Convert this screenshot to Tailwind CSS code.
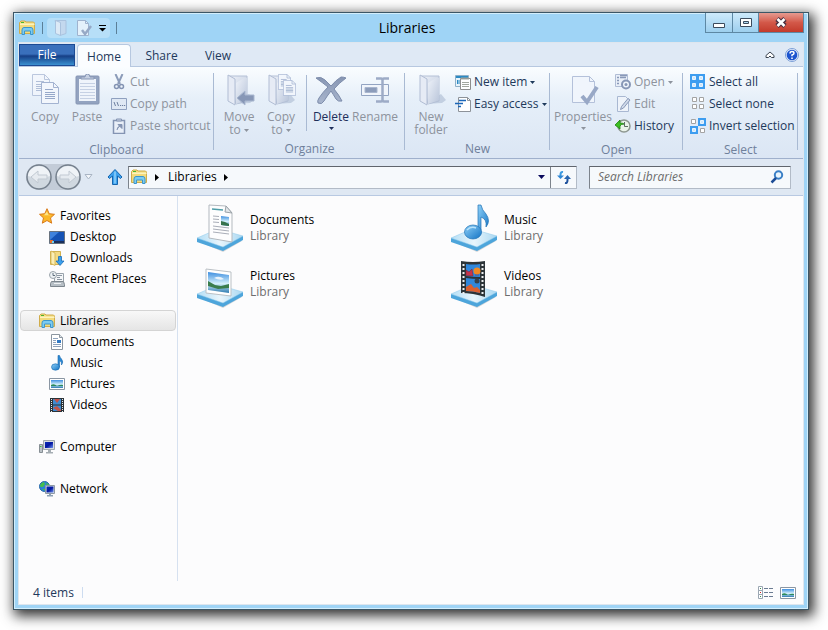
<!DOCTYPE html>
<html lang="en">

<head>
    <meta charset="UTF-8">
    <meta name="viewport" content="width=device-width, initial-scale=1.0">
    <title>Libraries</title>
    <script src="https://cdn.jsdelivr.net/npm/@tailwindcss/browser@4"></script>
</head>

<body class="bg-white font-['Open_Sans','Noto_Sans',sans-serif] text-xs">

    <!-- Shared icons -->
    <svg class="absolute size-0" aria-hidden="true">
        <defs>
            <linearGradient id="folderGray" x1="0" x2="1" y2="1">
                <stop offset="0" stop-color="#eef2f9" />
                <stop offset="1" stop-color="#b9c5da" />
            </linearGradient>
            <linearGradient id="slab" x1="0" x2="1">
                <stop offset="0" stop-color="#b4def5" />
                <stop offset=".5" stop-color="#e8f5fc" />
                <stop offset="1" stop-color="#a9d7f1" />
            </linearGradient>
            <linearGradient id="note" x1="0" x2="1" y2="1">
                <stop offset="0" stop-color="#8ed0f8" />
                <stop offset="1" stop-color="#1273c4" />
            </linearGradient>
            <linearGradient id="sky" x2="0" y2="1">
                <stop offset="0" stop-color="#3f8fe0" />
                <stop offset=".55" stop-color="#d4f0fb" />
                <stop offset="1" stop-color="#2d7ab0" />
            </linearGradient>
            <linearGradient id="screen" x1="0" x2="1" y2="1">
                <stop offset="0" stop-color="#0a2bb8" />
                <stop offset=".5" stop-color="#0418a0" />
                <stop offset="1" stop-color="#6f92ee" />
            </linearGradient>
            <linearGradient id="steel" x2="0" y2="1">
                <stop offset="0" stop-color="#8796b3" />
                <stop offset="1" stop-color="#a9b6ce" />
            </linearGradient>
        </defs>
        <symbol id="caret" viewBox="0 0 5 3">
            <path d="M0 0h5L2.500 3z" fill="currentColor" />
        </symbol>
        <symbol id="libraries" viewBox="0 0 16 16">
            <path d="M.5 13.500V2.500L2 1h4l1 1h7.500l1 1v10.500z" fill="#f3da7c" stroke="#d0ac4a" />
            <path d="M1 5h14.500V3.500H1z" fill="#fdf3bb" />
            <path d="M2 2.500h3" stroke="#4bb52d" />
            <path d="M3 14.500V10q0-2.500 2-2.500h7q2 0 2 2.500v4.500h-2.500V11h-6v3.500z" fill="#7ccbf0" stroke="#3b95cc" />
        </symbol>
        <symbol id="picture" viewBox="0 0 16 16">
            <path d="M.5 2.500h15v11H.5z" fill="#fff" stroke="#8a96a3" />
            <path d="M2 4h12v8H2z" fill="url(#sky)" />
            <path d="M2 9q3-2 6 1 4-2 6-1v1H2z" fill="#2c8a5a" />
        </symbol>
        <symbol id="slabBase" viewBox="0 0 48 48">
            <path d="M4 38l23 10 19-11-20-5z" fill="#000" opacity=".15" />
            <path d="M1 34v4l26 9 20-11v-4z" fill="#4da5db" />
            <path d="M1 34l21-9 25 7-20 11z" fill="url(#slab)" stroke="#8cc8ea" stroke-width=".5" />
        </symbol>
        <symbol id="folderBig" viewBox="0 0 32 32">
            <path d="M9 30l18-1 4-3-5-6z" fill="#8fa0be" opacity=".4" />
            <path d="M6 2h18v25l-11 3z" fill="url(#folderGray)" stroke="#b4c0d6" />
            <path d="M5 1l7 4v26l-7-4z" fill="#e6ebf5" stroke="#b1bdd4" />
            <path d="M13 9l8-5h3v22l-11 4z" fill="url(#folderGray)" />
        </symbol>
        <symbol id="pageGray" viewBox="0 0 18 22">
            <path d="M.5.500h12l5 5v16H.5z" fill="#f2f6fc" stroke="#a3b3d1" />
            <path d="M12.500.500v5h5" fill="none" stroke="#a3b3d1" />
            <path d="M4 7.500h8M4 10.500h10M4 12.500h10M4 14.500h10M4 16.500h10" stroke="#96a8c9" />
        </symbol>
    </svg>

    <div class="flex h-screen pt-3 pr-[19px] pb-5 pl-[13px]">
        <div class="flex flex-1 flex-col border border-[#3c5666] bg-[#9fd4f6] shadow-[3px_4px_12px_2px_rgba(0,0,0,0.8)]">
            <div class="flex flex-1 flex-col border border-[#d3eefc] px-[3px] pb-[3px]">

                <!-- Title bar -->
                <header class="relative flex h-7 items-center justify-center pr-2 text-black">
                    <div class="absolute top-0.5 left-px flex h-6 items-center">
                        <svg class="size-4">
                            <use href="#libraries" />
                        </svg>
                        <span class="ml-[7px] h-3 w-px bg-[#5b7f98]"></span>
                        <div class="ml-1 flex h-5 items-center gap-[7px] rounded bg-white/25 pr-1 pl-1.5">
                            <button aria-label="New folder">
                                <svg class="block size-4" viewBox="0 0 16 16">
                                    <path d="M2 .500h11v13l-6 2z" fill="#c3d8ee" stroke="#a9c2de" />
                                    <path d="M2.500.500l5 2v13l-5-2z" fill="#dce9f6" stroke="#a9c2de" />
                                </svg>
                            </button>
                            <button aria-label="Properties">
                                <svg class="block size-4" viewBox="0 0 16 16">
                                    <path d="M1.500.500h8l3 3v12h-11z" fill="#e4f1fb" stroke="#9fb3cf" />
                                    <path d="M9.500.500v3h3" fill="none" stroke="#9fb3cf" />
                                    <path d="M6 10l3 4 6-8" fill="none" stroke="#96a9c6" stroke-width="2.500" />
                                </svg>
                            </button>
                            <button aria-label="Customize toolbar">
                                <svg class="block h-2 w-[7px]" viewBox="0 0 7 8">
                                    <path d="M0 1.500h7" stroke="currentColor" />
                                    <path d="M0 4h7L3.500 7.500z" fill="currentColor" />
                                </svg>
                            </button>
                        </div>
                        <span class="ml-1.5 h-3 w-px bg-[#5b7f98]"></span>
                    </div>

                    <h1 class="text-sm">Libraries</h1>

                    <div class="absolute -top-px right-0 flex h-5 border border-t-0 border-[#5d88a4]">
                        <button aria-label="Minimize" class="flex w-[27px] items-end justify-center border-r border-[#5d88a4] bg-linear-to-b from-[#cdeafb] to-[#9dcfee] pb-1">
                            <svg class="h-[5px] w-3" viewBox="0 0 12 5">
                                <path d="M.5.500h11v4H.5z" fill="#fff" stroke="#3c4b5c" />
                            </svg>
                        </button>
                        <button aria-label="Maximize" class="flex w-[26px] items-center justify-center border-r border-[#5d88a4] bg-linear-to-b from-[#cdeafb] to-[#9dcfee]">
                            <svg class="h-[9px] w-3" viewBox="0 0 12 9">
                                <path d="M.5.500h11v8H.5z" fill="#fff" stroke="#3c4b5c" />
                                <path d="M3.500 3.500h5v2h-5z" fill="#b0daf2" stroke="#3c4b5c" />
                            </svg>
                        </button>
                        <button aria-label="Close" class="flex w-11 items-center justify-center bg-linear-to-b from-[#e69a90] via-[#d35849] to-[#c23a2b]">
                            <svg class="h-[11px] w-3" viewBox="0 0 12 11">
                                <path d="M2 2l8 7M10 2L2 9" stroke="#4a3040" stroke-width="5" />
                                <path d="M2.500 2l7 7M9.500 2l-7 7" stroke="#fff" stroke-width="2.500" />
                            </svg>
                        </button>
                    </div>
                </header>

                <div class="flex flex-1 flex-col border border-[#dfe6ee] bg-[#fcfcfd]">

                    <!-- Ribbon tabs -->
                    <nav class="flex h-6 items-end border-b border-[#b7c8e0] bg-[#dfe9f5] text-[#1e395b]">
                        <button class="h-[22px] w-14 border border-[#1c4a94] bg-linear-to-b from-[#3a70bc] from-45% via-[#173f86] via-55% to-[#3a90d0] text-white">File</button>
                        <button class="-mb-px ml-0.5 h-[23px] w-[54px] rounded-t border border-b-0 border-[#b7c8e0] bg-[#fbfdff] pt-0.5">Home</button>
                        <button class="h-[22px] w-[61px] pt-0.5">Share</button>
                        <button class="h-[22px] w-[52px] pt-0.5">View</button>
                        <div class="ml-auto flex h-[22px] items-center gap-[10px] pr-1">
                            <button aria-label="Collapse ribbon">
                                <svg class="block h-2 w-[10px]" viewBox="0 0 10 8">
                                    <path d="M1 4.500L5 1l4 3.500v2H6.500L5 5 3.500 6.500H1z" fill="#fff" stroke="#3b4450" />
                                </svg>
                            </button>
                            <button aria-label="Help">
                                <svg class="block size-[14px]" viewBox="0 0 14 14">
                                    <circle cx="7" cy="7" r="6.500" fill="#e8f0fb" stroke="#7c9fd6" />
                                    <circle cx="7" cy="7" r="5.300" fill="#1d55cf" />
                                    <path d="M5 5.500Q5 3.500 7 3.500t2 1.700Q9 6.300 7 7v1.300M7 9.500V11" fill="none" stroke="#fff" stroke-width="1.500" />
                                </svg>
                            </button>
                        </div>
                    </nav>

                    <!-- Ribbon -->
                    <div class="flex h-[92px] border-b border-[#9fb0cc] bg-linear-to-b from-[#fafdff] via-[#e6eff9] via-35% to-[#dbe6f4] text-[#8d939d]">

                        <section class="relative flex w-[195px] flex-col pt-1">
                            <div class="flex h-[66px] pl-[5px]">
                                <button class="flex w-[42px] flex-col items-center gap-1 pt-[3px] leading-[13px]">
                                    <svg class="size-8 shrink-0" viewBox="0 0 32 32">
                                        <use href="#pageGray" x="3" y="0" width="18" height="22" opacity=".7" />
                                        <use href="#pageGray" x="12" y="8" width="18" height="22" />
                                    </svg>
                                    Copy
                                </button>
                                <button class="flex w-[42px] flex-col items-center gap-1 pt-[3px] leading-[13px]">
                                    <svg class="size-8 shrink-0" viewBox="0 0 32 32">
                                        <rect x="5" y="2" width="23" height="28" rx="1" fill="#93a3c0" stroke="#8796b4" />
                                        <path d="M8 5h17v22H8z" fill="#eff4fb" />
                                        <path d="M9 9.500h15M9 12.500h15M9 15.500h15M9 18.500h15M9 21.500h15M9 24.500h15" stroke="#c6d1e4" />
                                        <path d="M10 5V3h4q0-3 2.500-3T19 3h4v2z" fill="#c6d0e2" stroke="#8796b4" />
                                    </svg>
                                    Paste
                                </button>
                                <div class="flex flex-col pl-[3px]">
                                    <button class="flex h-[22px] items-center gap-[3px]">
                                        <svg class="size-4" viewBox="0 0 16 16">
                                            <path d="M4.500 0L9 10M11.500 0L7 10" stroke="#8c9cb9" stroke-width="2" />
                                            <circle cx="5.500" cy="12.500" r="2" fill="none" stroke="#8494b3" stroke-width="1.500" />
                                            <circle cx="10.500" cy="12.500" r="2" fill="none" stroke="#8494b3" stroke-width="1.500" />
                                        </svg>
                                        Cut
                                    </button>
                                    <button class="flex h-[22px] items-center gap-[3px]">
                                        <svg class="size-4" viewBox="0 0 16 16">
                                            <path d="M.5 2.500h15v11H.5z" fill="#dfe8f4" stroke="#8fa0bf" />
                                            <path d="M3 6l1.500 4M6 6l1.500 4M9 9.500h1.200M11 9.500h1.200M13 9.500h1.200" stroke="#6d7f9f" />
                                        </svg>
                                        Copy path
                                    </button>
                                    <button class="flex h-[22px] items-center gap-[3px]">
                                        <svg class="size-4" viewBox="0 0 16 16">
                                            <path d="M2.500 2.500h11v13h-11z" fill="#e9eff8" stroke="#8494b3" stroke-width="1.500" />
                                            <path d="M5.500 3V1h5v2z" fill="#c6d0e2" stroke="#8494b3" />
                                            <path d="M6 12q0-3 3-4M7 6.500h4v4z" fill="#8494b3" stroke="#8494b3" />
                                        </svg>
                                        Paste shortcut
                                    </button>
                                </div>
                            </div>
                            <h2 class="mt-1 text-center leading-[18px] text-[#6f809b]">Clipboard</h2>
                            <span class="absolute top-1.5 right-0 h-[77px] w-px bg-[#a9bad3]"></span>
                        </section>

                        <section class="relative flex w-[191px] flex-col pt-1">
                            <div class="flex h-[66px] pl-1">
                                <button class="flex w-[42px] flex-col items-center gap-1 pt-[3px] leading-[13px]">
                                    <svg class="size-8 shrink-0" viewBox="0 0 32 32">
                                        <use href="#folderBig" width="32" height="32" />
                                        <path d="M14 24l8-7v4h9v6h-9v4z" fill="#8797b6" stroke="#a9b7d0" />
                                    </svg>
                                    <span>Move<br>to <svg class="inline h-[3px] w-[5px]"><use href="#caret" /></svg></span>
                                </button>
                                <button class="flex w-[42px] flex-col items-center gap-1 pt-[3px] leading-[13px]">
                                    <svg class="size-8 shrink-0" viewBox="0 0 32 32">
                                        <use href="#folderBig" x="-1" width="32" height="32" />
                                        <use href="#pageGray" x="13" y="0" width="13" height="16" />
                                        <use href="#pageGray" x="18" y="6" width="13" height="16" />
                                    </svg>
                                    <span>Copy<br>to <svg class="inline h-[3px] w-[5px]"><use href="#caret" /></svg></span>
                                </button>
                                <span class="mt-1 mr-[3px] ml-1 h-[56px] w-px bg-[#a9bad3]"></span>
                                <button class="flex w-[42px] flex-col items-center gap-1 pt-[3px] leading-[13px] text-[#1e2f5b]">
                                    <svg class="size-8 shrink-0" viewBox="0 0 32 32">
                                        <path d="M1 4q5-2 9 2 3 3 6 6 5-6 10-9 3 0 5 1-7 5-12 11 5 6 8 12-4 1-6-2-3-5-5-8-4 5-7 10-2 4-6 2-1-2 1-5 4-6 9-11Q8 9 1 4z" fill="url(#steel)" stroke="#7d8cab" />
                                    </svg>
                                    Delete
                                    <svg class="h-[3px] w-[5px]"><use href="#caret" /></svg>
                                </button>
                                <button class="flex w-[46px] flex-col items-center gap-1 pt-[3px] leading-[13px]">
                                    <svg class="size-8 shrink-0" viewBox="0 0 32 32">
                                        <path d="M2.500 10.500h27v11h-27z" fill="#f1f5fb" stroke="#93a4c2" />
                                        <path d="M6 13.500h12v5H6z" fill="#8c9cba" stroke="#a9b6ce" />
                                        <path d="M17 4.500h5q1.500 0 1.500 2 0-2 1.500-2h5M17 27.500h5q1.500 0 1.500-2 0 2 1.500 2h5M23.500 6v20" fill="none" stroke="#9dabc6" stroke-width="2.500" />
                                    </svg>
                                    Rename
                                </button>
                            </div>
                            <h2 class="mt-1 text-center leading-[18px] text-[#6f809b]">Organize</h2>
                            <span class="absolute top-1.5 right-0 h-[77px] w-px bg-[#a9bad3]"></span>
                        </section>

                        <section class="relative flex w-[145px] flex-col pt-1">
                            <div class="flex h-[66px] pl-[5px]">
                                <button class="flex w-[42px] flex-col items-center gap-1 pt-[3px] leading-[13px]">
                                    <svg class="size-8 shrink-0">
                                        <use href="#folderBig" />
                                    </svg>
                                    <span>New<br>folder</span>
                                </button>
                                <div class="flex flex-col pl-[3px] text-[#1e395b]">
                                    <button class="flex h-[22px] items-center gap-[3px]">
                                        <svg class="size-4" viewBox="0 0 16 16">
                                            <path d="M.5 1.500h13v11H.5z" fill="#e7f3fb" stroke="#8fb0c8" />
                                            <path d="M1 2h12v2H1z" fill="#2b8ac4" />
                                            <path d="M2.500 10V6M4 6v4" stroke="#2b8ac4" />
                                            <path d="M5.500 4.500h10v11h-10z" fill="#fff" stroke="#8d8d8d" />
                                            <path d="M7 3v3M9 3v3M11 3v3M13 3v3M7 8.500h7M7 10.500h7M7 12.500h7" stroke="#a2a79f" />
                                        </svg>
                                        New item
                                        <svg class="h-[3px] w-[5px]"><use href="#caret" /></svg>
                                    </button>
                                    <button class="flex h-[22px] items-center gap-[3px]">
                                        <svg class="size-4" viewBox="0 0 16 16">
                                            <path d="M3.500 1.500h9l3 3v11h-12z" fill="#fff" stroke="#8d9299" />
                                            <path d="M12.500 1.500v3h3" fill="none" stroke="#8d9299" />
                                            <path d="M4 4.500h7M0 7.500h8M3 10.500h3" stroke="#1b66b8" stroke-width="1.500" />
                                        </svg>
                                        Easy access
                                        <svg class="h-[3px] w-[5px]"><use href="#caret" /></svg>
                                    </button>
                                </div>
                            </div>
                            <h2 class="mt-1 text-center leading-[18px] text-[#6f809b]">New</h2>
                            <span class="absolute top-1.5 right-0 h-[77px] w-px bg-[#a9bad3]"></span>
                        </section>

                        <section class="relative flex w-[133px] flex-col pt-1">
                            <div class="flex h-[66px] pl-[5px]">
                                <button class="flex w-[56px] flex-col items-center gap-1 pt-[3px] leading-[13px]">
                                    <svg class="size-8 shrink-0" viewBox="0 0 32 32">
                                        <path d="M5.500 2.500h17l5 5v21h-22z" fill="#f0f5fc" stroke="#b4c1da" />
                                        <path d="M22.500 2.500v5h5" fill="none" stroke="#b4c1da" />
                                        <path d="M15 22l5 6 10-15" fill="none" stroke="#98a8c6" stroke-width="4" />
                                    </svg>
                                    Properties
                                    <svg class="h-[3px] w-[5px]"><use href="#caret" /></svg>
                                </button>
                                <div class="flex flex-col pl-1">
                                    <button class="flex h-[22px] items-center gap-[3px]">
                                        <svg class="size-4" viewBox="0 0 16 16">
                                            <path d="M.5.500h12v12H.5z" fill="#e9eff8" stroke="#b0bdd5" />
                                            <path d="M2 3.500h2M5 3.500h6M2 6.500h2M2 9.500h2M5 1.500h7" stroke="#8999b8" stroke-width="1.500" />
                                            <circle cx="11" cy="10.500" r="4" fill="#eef3fa" stroke="#8797b6" stroke-width="2" />
                                            <circle cx="11" cy="10.500" r="1.500" fill="#8797b6" />
                                        </svg>
                                        Open
                                        <svg class="h-[3px] w-[5px]"><use href="#caret" /></svg>
                                    </button>
                                    <button class="flex h-[22px] items-center gap-[3px]">
                                        <svg class="size-4" viewBox="0 0 16 16">
                                            <path d="M2.500.500h8l3 3v12h-11z" fill="#eef3fa" stroke="#a9b8d2" />
                                            <path d="M5.500 13.500l1-3 6.500-8 2 1.500-6.500 8z" fill="#cfd9e9" stroke="#8999b8" />
                                        </svg>
                                        Edit
                                    </button>
                                    <button class="flex h-[22px] items-center gap-[3px] text-[#1e395b]">
                                        <svg class="size-4" viewBox="0 0 16 16">
                                            <circle cx="9" cy="8" r="6" fill="#eaf3ea" stroke="#8e9791" stroke-width="1.500" />
                                            <path d="M9.500 4v4.500H13" fill="none" stroke="#5c6b62" />
                                            <path d="M0 7l5-5v3q3 0 4 1-3 0-4 2v3z" fill="#3cbf22" stroke="#1d7d10" stroke-width=".8" />
                                        </svg>
                                        History
                                    </button>
                                </div>
                            </div>
                            <h2 class="mt-1 text-center leading-[18px] text-[#6f809b]">Open</h2>
                            <span class="absolute top-1.5 right-0 h-[77px] w-px bg-[#a9bad3]"></span>
                        </section>

                        <section class="relative flex w-[115px] flex-col pt-1">
                            <div class="flex h-[66px] flex-col pl-[7px] text-[#1e395b]">
                                <button class="flex h-[22px] items-center gap-[3px]">
                                    <svg class="size-4" viewBox="0 0 16 16">
                                        <path d="M0 0h15v15H0z" fill="#3d9df0" />
                                        <path d="M2.500 2.500h3v3h-3zM9.500 2.500h3v3h-3zM2.500 9.500h3v3h-3zM9.500 9.500h3v3h-3z" fill="#cfe6fa" stroke="#e9f4fd" />
                                    </svg>
                                    Select all
                                </button>
                                <button class="flex h-[22px] items-center gap-[3px]">
                                    <svg class="size-4" viewBox="0 0 16 16">
                                        <path d="M2.500 1.500h4v4h-4zM9.500 1.500h4v4h-4zM2.500 8.500h4v4h-4zM9.500 8.500h4v4h-4z" fill="#fff" stroke="#a3a3a3" />
                                    </svg>
                                    Select none
                                </button>
                                <button class="flex h-[22px] items-center gap-[3px]">
                                    <svg class="size-4" viewBox="0 0 16 16">
                                        <path d="M8 0h8v8H8zM0 8h8v8H0z" fill="#3d9df0" />
                                        <path d="M10.500 2.500h3v3h-3zM2.500 10.500h3v3h-3z" fill="#cfe6fa" stroke="#e9f4fd" />
                                        <path d="M1.500 1.500h4v4h-4zM10.500 10.500h4v4h-4z" fill="#fff" stroke="#a3a3a3" />
                                    </svg>
                                    Invert selection
                                </button>
                            </div>
                            <h2 class="mt-1 text-center leading-[18px] text-[#6f809b]">Select</h2>
                            <span class="absolute top-1.5 right-0 h-[77px] w-px bg-[#a9bad3]"></span>
                        </section>
                    </div>

                    <!-- Address bar -->
                    <div class="flex h-[37px] items-center border-b border-[#b8c9e2] bg-[#dfe8f3] pr-3 pl-[7px]">
                        <div class="flex gap-[3px] rounded-full bg-[#c3ccd8]">
                            <button aria-label="Back">
                                <svg class="block size-[26px]" viewBox="0 0 26 26">
                                    <circle cx="13" cy="13" r="12" fill="#d0d8e0" stroke="#75808d" stroke-width="1.500" />
                                    <path d="M2 12a11 10 0 0 1 22 0q-11 4-22 0z" fill="#eff3f7" />
                                    <path d="M5 13l7-6v4h9v4h-9v4z" fill="#e6ebf0" stroke="#c1c9d2" />
                                </svg>
                            </button>
                            <button aria-label="Forward">
                                <svg class="block size-[26px]" viewBox="0 0 26 26">
                                    <circle cx="13" cy="13" r="12" fill="#d0d8e0" stroke="#75808d" stroke-width="1.500" />
                                    <path d="M2 12a11 10 0 0 1 22 0q-11 4-22 0z" fill="#eff3f7" />
                                    <path d="M21 13l-7-6v4H5v4h9v4z" fill="#e6ebf0" stroke="#c1c9d2" />
                                </svg>
                            </button>
                        </div>
                        <button aria-label="Recent locations" class="ml-[3px]">
                            <svg class="block h-[6px] w-[9px]" viewBox="0 0 9 6">
                                <path d="M1 .500h7L4.500 5z" fill="#f3f6fa" stroke="#a9b5c4" />
                            </svg>
                        </button>
                        <button aria-label="Up" class="ml-[14px]">
                            <svg class="block size-4" viewBox="0 0 16 16">
                                <path d="M8 .500l7 7.500-1.500 1.500-3-2.500v8.500h-5V7l-3 2.500L1 8z" fill="#3ba0ee" stroke="#1565ae" />
                                <path d="M8 2.500v12" stroke="#8fd0fa" stroke-width="1.500" />
                            </svg>
                        </button>

                        <div class="ml-[5px] flex h-[23px] flex-1 border border-[#b2bbc7] border-t-[#60656d] border-l-[#7c838c] bg-[#f6f9fc] text-black">
                            <div class="flex flex-1 items-center pr-[5px] pl-0.5">
                                <svg class="size-4">
                                    <use href="#libraries" />
                                </svg>
                                <svg class="ml-2 h-[7px] w-1" viewBox="0 0 4 7">
                                    <path d="M0 0l4 3.500L0 7z" />
                                </svg>
                                <a href="#" class="ml-[9px]">Libraries</a>
                                <svg class="ml-[7px] h-[7px] w-1" viewBox="0 0 4 7">
                                    <path d="M0 0l4 3.500L0 7z" />
                                </svg>
                                <button aria-label="Previous locations" class="ml-auto text-[#0a0a5c]">
                                    <svg class="block h-1 w-[7px]" viewBox="0 0 7 4">
                                        <path d="M0 0h7L3.500 4z" fill="currentColor" />
                                    </svg>
                                </button>
                            </div>
                            <button aria-label="Refresh" class="flex w-[26px] items-center justify-center border-l border-[#7c838c]">
                                <svg class="size-4" viewBox="0 0 16 16">
                                    <path d="M7 3Q4.500 2.500 4.500 6v2" fill="none" stroke="#3b9ae0" stroke-width="2" />
                                    <path d="M1 6.500h7L4.500 10z" fill="#2f86d4" />
                                    <path d="M9 14q2.500.500 2.500-3V9" fill="none" stroke="#1d509c" stroke-width="2" />
                                    <path d="M8 10h7l-3.500-4z" fill="#2765b0" />
                                </svg>
                            </button>
                        </div>

                        <label class="ml-3 flex h-[23px] w-[202px] items-center border border-[#b2bbc7] border-t-[#60656d] border-l-[#7c838c] bg-[#f6f9fc] pr-1.5 pl-2">
                            <input type="search" placeholder="Search Libraries" aria-label="Search Libraries" class="min-w-0 flex-1 italic outline-none placeholder:text-[#6d6d6d]">
                            <svg class="size-[14px]" viewBox="0 0 14 14">
                                <circle cx="8.500" cy="5" r="3.700" fill="#eaf5fd" stroke="#3a7fc6" stroke-width="2" />
                                <path d="M6 8l-4.500 4.500" stroke="#1d4c96" stroke-width="2.500" />
                            </svg>
                        </label>
                    </div>

                    <!-- Sidebar and library list -->
                    <div class="flex flex-1 text-black">
                        <aside class="w-[159px] border-r border-[#d6e1f0] pt-[9px] pr-px pl-px">
                            <ul class="leading-[21px]">
                                <li>
                                    <a href="#" class="flex h-[21px] items-center gap-[5px] pl-[19px]">
                                        <svg class="size-4" viewBox="0 0 16 16">
                                            <path d="M8 .700l2.200 5 5.300.600-4 3.600 1.200 5.300L8 12.500l-4.700 2.700 1.200-5.300-4-3.600 5.300-.600z" fill="#fbb829" stroke="#d97b1c" />
                                            <path d="M8 3.500l1.300 3.300 3 .400H5z" fill="#fde58a" />
                                        </svg>
                                        Favorites
                                    </a>
                                </li>
                                <li>
                                    <a href="#" class="flex h-[21px] items-center gap-[5px] pl-[29px]">
                                        <svg class="size-4" viewBox="0 0 16 16">
                                            <path d="M.5 2.500h15v12H.5z" fill="#1552b4" stroke="#68727e" />
                                            <path d="M1 3h9L1 11z" fill="#3f82dc" />
                                            <path d="M1 12h14v2H1z" fill="#1b2f5c" />
                                            <path d="M1 11h3v3H1z" fill="#e8702a" />
                                            <path d="M3 12h2v2H3z" fill="#6fd0f0" />
                                        </svg>
                                        Desktop
                                    </a>
                                </li>
                                <li>
                                    <a href="#" class="flex h-[21px] items-center gap-[5px] pl-[29px]">
                                        <svg class="size-4" viewBox="0 0 16 16">
                                            <path d="M1.500 1.500h10v13h-10z" fill="#f3db84" stroke="#d2b150" />
                                            <path d="M2 1l4 2v12.500l-4-2z" fill="#fbeeb4" stroke="#d2b150" stroke-width=".8" />
                                            <path d="M9.500 6.500h3V11h2.500L11 15.500 7 11h2.500z" fill="#3ba0ee" stroke="#1c6cb6" stroke-width=".8" />
                                        </svg>
                                        Downloads
                                    </a>
                                </li>
                                <li>
                                    <a href="#" class="flex h-[21px] items-center gap-[5px] pl-[29px]">
                                        <svg class="size-4" viewBox="0 0 16 16">
                                            <path d="M5.500 2.500h9v8h-9z" fill="#f4f6f8" stroke="#98a2ab" />
                                            <path d="M8 4.500h5M8 6.500h3M8 8.500h5" stroke="#8c97a3" />
                                            <circle cx="4" cy="4" r="3.500" fill="#eef2f5" stroke="#9aa3ab" />
                                            <path d="M4 2v2.500h2" fill="none" stroke="#5f6e7c" />
                                            <path d="M2.500 10.500h12l1 3v2h-14v-3z" fill="#b6bec5" stroke="#7d868e" />
                                            <path d="M5 12.500h7" stroke="#eef1f3" />
                                        </svg>
                                        Recent Places
                                    </a>
                                </li>
                            </ul>
                            <ul class="mt-[21px] leading-[21px]">
                                <li>
                                    <a href="#" class="flex h-[21px] items-center gap-[5px] rounded-sm border border-[#d4d4d4] bg-linear-to-b from-[#f8f8f8] to-[#e5e5e5] pl-[18px]">
                                        <svg class="size-4">
                                            <use href="#libraries" />
                                        </svg>
                                        Libraries
                                    </a>
                                </li>
                                <li>
                                    <a href="#" class="flex h-[21px] items-center gap-[5px] pl-[29px]">
                                        <svg class="size-4" viewBox="0 0 16 16">
                                            <path d="M2.500.500h8l3 3v12h-11z" fill="#fff" stroke="#8c96a0" />
                                            <path d="M10.500.500v3h3" fill="#dfe5ea" stroke="#8c96a0" />
                                            <path d="M4 4.500h5M4 6.500h3M4 8.500h3M4 10.500h8M4 12.500h8" stroke="#8fa3bd" />
                                            <path d="M8 6h4v3H8z" fill="#2f78c4" />
                                        </svg>
                                        Documents
                                    </a>
                                </li>
                                <li>
                                    <a href="#" class="flex h-[21px] items-center gap-[5px] pl-[29px]">
                                        <svg class="size-4" viewBox="0 0 16 16">
                                            <path d="M9 .500h1.500q.500 2 2 3.500 2.500 3 0 6 .500-3.500-2-4.500V12H9z" fill="#2d8ad4" stroke="#1868ae" stroke-width=".6" />
                                            <ellipse cx="6.500" cy="12" rx="4" ry="3.200" fill="url(#note)" stroke="#1868ae" stroke-width=".6" />
                                        </svg>
                                        Music
                                    </a>
                                </li>
                                <li>
                                    <a href="#" class="flex h-[21px] items-center gap-[5px] pl-[29px]">
                                        <svg class="size-4">
                                            <use href="#picture" />
                                        </svg>
                                        Pictures
                                    </a>
                                </li>
                                <li>
                                    <a href="#" class="flex h-[21px] items-center gap-[5px] pl-[29px]">
                                        <svg class="size-4" viewBox="0 0 16 16">
                                            <path d="M1 1h14v14H1z" fill="#2b3237" />
                                            <path d="M4 2h8v5.500H4zM4 8.500h8V14H4z" fill="#3f8bd2" />
                                            <path d="M5 2h6L8 6zM4 11l4-2 4 4v1H9z" fill="#c2544a" />
                                            <path d="M2.500 2v13M13.500 2v13" stroke="#e6eaec" stroke-dasharray="1 1" />
                                        </svg>
                                        Videos
                                    </a>
                                </li>
                            </ul>
                            <ul class="mt-[21px] leading-[21px]">
                                <li>
                                    <a href="#" class="flex h-[21px] items-center gap-[5px] pl-[19px]">
                                        <svg class="size-4" viewBox="0 0 16 16">
                                            <path d="M.5 5.500h3v8h-3z" fill="#bcc3c8" stroke="#868e94" />
                                            <path d="M1 7.500h1.500" stroke="#3bc43b" />
                                            <path d="M4.500 1.500h11v9h-11z" fill="#d8dde1" stroke="#a0a8ae" />
                                            <path d="M6 3h8v6H6z" fill="url(#screen)" />
                                            <path d="M9 11h3v2h2v1.500H7V13h2z" fill="#a5adb3" />
                                        </svg>
                                        Computer
                                    </a>
                                </li>
                            </ul>
                            <ul class="mt-[21px] leading-[21px]">
                                <li>
                                    <a href="#" class="flex h-[21px] items-center gap-[5px] pl-[19px]">
                                        <svg class="size-4" viewBox="0 0 16 16">
                                            <circle cx="5.500" cy="5.500" r="5" fill="#2a82d8" stroke="#2467a8" />
                                            <path d="M1 4q2-3 4-3l1 2-2 3H1.500zM7 1.500l3 2V6L8 5zM3 8l3 0 .500 2z" fill="#45bf4a" />
                                            <path d="M6.500 4.500h9v8h-9z" fill="#dbe2e8" stroke="#8f9aa4" />
                                            <path d="M7.500 5.500h7v6h-7z" fill="url(#screen)" />
                                            <path d="M10 13h2v1h2v1.500H8V14h2z" fill="#8ca0b4" />
                                        </svg>
                                        Network
                                    </a>
                                </li>
                            </ul>
                        </aside>

                        <main class="grid flex-1 grid-cols-[254px_254px] content-start pt-1 pl-[18px] leading-4">
                            <a href="#" class="flex h-14 items-center gap-1.5">
                                <svg class="size-12" viewBox="0 0 48 48">
                                    <use href="#slabBase" width="48" height="48" />
                                    <path d="M13 1l17 1 6 7v29l-23-4z" fill="#fdfdfe" stroke="#b3b9bf" />
                                    <path d="M30 2l-1 6 7 1z" fill="#e3e7ea" stroke="#9ba2a8" />
                                    <path d="M16 5l11 1" stroke="#4f9da8" stroke-width="1.500" />
                                    <path d="M17 12l6 .500M17 15l6 .500M17 18l6 .500M17 22l16 2M17 25l16 2M17 28l16 2" stroke="#a9adb8" />
                                    <path d="M25 12l8 1v9l-8-1z" fill="url(#sky)" />
                                    <path d="M25 17l4 1 4 2v2l-8-1z" fill="#36734c" />
                                </svg>
                                <div>
                                    <p>Documents</p>
                                    <p class="text-[#6d6d6d]">Library</p>
                                </div>
                            </a>
                            <a href="#" class="flex h-14 items-center gap-1.5">
                                <svg class="size-12" viewBox="0 0 48 48">
                                    <use href="#slabBase" width="48" height="48" />
                                    <path d="M28 1h3q1 5 5 9 5 7 0 13 1-8-5-10v17h-3z" fill="url(#note)" stroke="#2273b4" stroke-width=".7" />
                                    <ellipse cx="23" cy="28" rx="8.500" ry="7" fill="url(#note)" stroke="#2273b4" stroke-width=".7" />
                                    <path d="M17 26q4-4 9-2" fill="none" stroke="#b9e3fb" stroke-width="1.500" />
                                </svg>
                                <div>
                                    <p>Music</p>
                                    <p class="text-[#6d6d6d]">Library</p>
                                </div>
                            </a>
                            <a href="#" class="flex h-14 items-center gap-1.5">
                                <svg class="size-12" viewBox="0 0 48 48">
                                    <use href="#slabBase" width="48" height="48" />
                                    <path d="M10 9l25 3v24l-25-3z" fill="#fff" stroke="#bac0c5" />
                                    <path d="M12 12l21 3v18l-21-3z" fill="url(#sky)" />
                                    <path d="M12 21l7 4 6 1 8-2v4l-11 1-10-3z" fill="#3a7d4c" />
                                    <path d="M18 18q5-3 10 1-4 2-10-1z" fill="#fff" opacity=".8" />
                                </svg>
                                <div>
                                    <p>Pictures</p>
                                    <p class="text-[#6d6d6d]">Library</p>
                                </div>
                            </a>
                            <a href="#" class="flex h-14 items-center gap-1.5">
                                <svg class="size-12" viewBox="0 0 48 48">
                                    <use href="#slabBase" width="48" height="48" />
                                    <path d="M11 1q12 2 24 0v36q-12-4-24-4z" fill="#2c3438" />
                                    <path d="M16 4q7 1 14 0v13q-7 0-14-1zM16 18q7 1 14 1v14q-7-2-14-2z" fill="#2f87dc" />
                                    <circle cx="27" cy="11" r="3.500" fill="#f08a24" />
                                    <path d="M16 10l3 2 3-3 1 7-7-.500zM25 15h4" fill="#c8334a" stroke="#7a2230" stroke-width=".5" />
                                    <circle cx="27" cy="21" r="2.500" fill="#35404c" />
                                    <path d="M16 27l5-3 3 4 3-1 3 3v3q-7-2-14-2z" fill="#d95f30" />
                                    <path d="M13.500 4v30M32.500 4v32" stroke="#edf0f1" stroke-width="2" stroke-dasharray="2 2" />
                                </svg>
                                <div>
                                    <p>Videos</p>
                                    <p class="text-[#6d6d6d]">Library</p>
                                </div>
                            </a>
                        </main>
                    </div>

                    <!-- Status bar -->
                    <footer class="flex h-[23px] items-center pr-[7px] pl-[14px] text-[#1e395b]">
                        <span>4 items</span>
                        <span class="ml-2 h-[11px] w-px bg-[#cddcf0]"></span>
                        <button aria-label="Details view" class="ml-auto">
                            <svg class="block size-4" viewBox="0 0 16 16">
                                <path d="M.5 1.500h4v4h-4zM.5 5.500h4v4h-4zM.5 9.500h4v4h-4z" fill="#fff" stroke="#9aa6b2" />
                                <path d="M2 3.500h1M2 11.500h1" stroke="#3a8a4a" />
                                <path d="M2 7.500h1" stroke="#d02020" />
                                <path d="M6 3.500h4M11 3.500h4M6 7.500h4M11 7.500h4M6 11.500h4M11 11.500h4" stroke="#6b7b92" />
                            </svg>
                        </button>
                        <button aria-label="Large icons view" class="ml-1.5">
                            <svg class="block size-4">
                                <use href="#picture" />
                            </svg>
                        </button>
                    </footer>
                </div>
            </div>
        </div>
    </div>
</body>

</html>
